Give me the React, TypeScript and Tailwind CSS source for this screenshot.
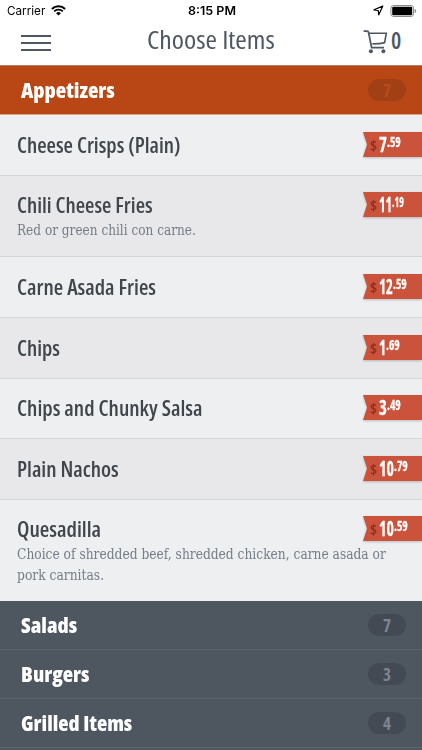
import { useLayoutEffect, useRef, useState } from 'react';

/* A single line of text, squeezed horizontally to a given set width. */
function Fit({ text, width, className = '' }: { text: string; width: number; className?: string }) {
  const ref = useRef<HTMLSpanElement>(null);
  const [scale, setScale] = useState(1);
  useLayoutEffect(() => {
    if (ref.current) setScale(width / ref.current.offsetWidth);
  }, [text, width]);
  return (
    <span className="flex shrink-0 items-start" style={{ width }}>
      <span
        ref={ref}
        className={`block shrink-0 origin-left whitespace-nowrap ${className}`}
        style={{ transform: `scaleX(${scale})` }}
      >
        {text}
      </span>
    </span>
  );
}

const SANS = "font-['Open_Sans','Noto_Sans',sans-serif] font-stretch-condensed";
const SERIF = "font-['DejaVu_Serif_Condensed','DejaVu_Serif',serif] font-stretch-condensed";

type Item = {
  name: string;
  width: number;
  whole: string;
  wholeWidth: number;
  cents: string;
  centsWidth: number;
  box: string;
  note?: { text: string; width: number }[];
};

const items: Item[] = [
  { name: 'Cheese Crisps (Plain)', width: 163, whole: '7', wholeWidth: 7, cents: '.59', centsWidth: 14, box: 'h-[61px] pt-[17px]' },
  { name: 'Chili Cheese Fries', width: 136, whole: '11', wholeWidth: 12, cents: '.19', centsWidth: 12, box: 'h-[81px] pt-[16px]', note: [{ text: 'Red or green chili con carne.', width: 179 }] },
  { name: 'Carne Asada Fries', width: 139, whole: '12', wholeWidth: 13, cents: '.59', centsWidth: 14, box: 'h-[61px] pt-[17px]' },
  { name: 'Chips', width: 43, whole: '1', wholeWidth: 6, cents: '.69', centsWidth: 14, box: 'h-[61px] pt-[17px]' },
  { name: 'Chips and Chunky Salsa', width: 185, whole: '3', wholeWidth: 7, cents: '.49', centsWidth: 14, box: 'h-[60px] pt-[16px]' },
  { name: 'Plain Nachos', width: 102, whole: '10', wholeWidth: 14, cents: '.79', centsWidth: 14, box: 'h-[61px] pt-[17px]' },
  {
    name: 'Quesadilla', width: 84, whole: '10', wholeWidth: 14, cents: '.59', centsWidth: 14, box: 'h-[101px] pt-[16px]',
    note: [
      { text: 'Choice of shredded beef, shredded chicken, carne asada or', width: 369 },
      { text: 'pork carnitas.', width: 87 },
    ],
  },
];

const sections = [
  { name: 'Salads', width: 56, count: '7' },
  { name: 'Burgers', width: 68, count: '3' },
  { name: 'Grilled Items', width: 111, count: '4' },
];

function StatusBar() {
  return (
    <div className="flex h-5 items-center justify-between pr-[5px] pl-[7px] font-['Inter','Roboto',sans-serif] text-black">
      <div className="flex w-[120px] items-center gap-[6px] pt-[2px]">
        <Fit text="Carrier" width={38} className="text-[12px] leading-[18px]" />
        <svg width="15" height="11" viewBox="0 0 15 11" fill="none" className="mb-[1px]">
          <path d="M0.9 3.9a9.6 9.6 0 0 1 13.2 0" stroke="#000" strokeWidth="2" />
          <path d="M3.2 6.4a6.2 6.2 0 0 1 8.6 0" stroke="#000" strokeWidth="1.9" />
          <path d="M7.5 10.6 5.1 8.2a3.4 3.4 0 0 1 4.8 0z" fill="#000" />
        </svg>
      </div>
      <div className="pt-[2px] pl-[3px]">
        <Fit text="8:15 PM" width={48} className="text-[12px] leading-[18px] font-semibold" />
      </div>
      <div className="flex w-[123px] items-center justify-end gap-[6px] pt-[1px]">
        <svg width="11" height="11" viewBox="0 0 11 11" fill="none">
          <path d="M9.8 1 1 4.9 5.2 5.5 5.8 9.8z" stroke="#000" strokeWidth="1.2" strokeLinejoin="round" />
        </svg>
        <svg width="27" height="12" viewBox="0 0 27 12" fill="none">
          <rect x="0.9" y="0.5" width="22.6" height="11" rx="2.6" stroke="#8a8a8a" />
          <rect x="2.2" y="1.8" width="20" height="8.4" rx="1.2" fill="#000" />
          <path d="M24.6 4v4c1.1-.4 1.6-1.1 1.6-2s-.5-1.6-1.6-2z" fill="#8a8a8a" />
        </svg>
      </div>
    </div>
  );
}

function PriceTag({ item }: { item: Item }) {
  return (
    <div className="h-[26px] w-[60px] shrink-0 drop-shadow-[0_1px_1px_rgba(0,0,0,0.22)]">
      <div className={`flex h-[25px] items-start bg-[#cb533b] pl-[8px] [clip-path:polygon(1px_0,100%_0,100%_100%,1px_100%,5px_50%)] ${SANS}`}>
        <Fit text="$" width={7} className="text-[15px] leading-[26px] font-bold text-[#8f3021]" />
        <div className="w-[2px] shrink-0" />
        <Fit text={item.whole} width={item.wholeWidth + 1} className="text-[21px] leading-[25px] font-bold text-white [-webkit-text-stroke:0.3px_white]" />
        <Fit text={item.cents} width={item.centsWidth} className="text-[14px] leading-[20px] font-bold text-white [-webkit-text-stroke:0.3px_white]" />
      </div>
    </div>
  );
}

function Badge({ count, className }: { count: string; className: string }) {
  return (
    <div className={`flex h-[22px] w-[38px] justify-center rounded-full ${className}`}>
      <Fit text={count} width={8} className={`text-[17px] leading-[23px] font-bold ${SANS}`} />
    </div>
  );
}

export default function App() {
  return (
    <div className="flex h-[750px] w-[422px] flex-col overflow-hidden bg-white">
      <StatusBar />
      <header className="flex h-[46px] shrink-0 justify-between border-b border-[#ad8068] pr-[21px] pl-[21px] text-[#4f5763]">
        <div className="flex w-[80px] flex-col gap-[5px] pt-[15px]">
          <div className="h-[2px] w-[30px] bg-[#4f5763]" />
          <div className="h-[2px] w-[30px] bg-[#4f5763]" />
          <div className="h-[2px] w-[30px] bg-[#4f5763]" />
        </div>
        <Fit text="Choose Items" width={128} className={`text-[26px] leading-[39px] ${SANS}`} />
        <div className="flex w-[80px] justify-end gap-[3px]">
          <svg width="25" height="24" viewBox="0 0 25 24" fill="none" className="mt-[10px]">
            <path d="M0.6 1.2 4 1.2Q5.4 1.2 5.6 2.6L8.6 17.6H21" stroke="#4f5763" strokeWidth="1.8" />
            <path d="M6 3.2H23.3L21.6 12.6Q16 14 9.3 13.8" stroke="#4f5763" strokeWidth="1.6" />
            <circle cx="7.9" cy="21.2" r="2" fill="#4f5763" />
            <circle cx="20.4" cy="21.2" r="2" fill="#4f5763" />
          </svg>
          <Fit text="0" width={10} className={`text-[23px] leading-[41px] font-semibold ${SANS}`} />
        </div>
      </header>

      <div className="flex h-[49px] shrink-0 items-center justify-between border-b border-[#dba58d] bg-[#b84715] pr-[16px] pl-[21px]">
        <Fit text="Appetizers" width={94} className={`text-[21px] leading-[48px] font-extrabold text-white ${SANS}`} />
        <Badge count="7" className="bg-[#a33f14] text-[#b84a1d]" />
      </div>

      {items.map((item, i) => (
        <div
          key={item.name}
          className={`flex shrink-0 justify-between border-b pl-[16.5px] ${item.box} ${i % 2 ? 'bg-[#e8e8ea]' : 'bg-[#eeeff1]'} ${i === 6 ? 'border-[#eeeff1]' : 'border-[#d6d7d9]'}`}
        >
          <div className="flex w-[345.5px] flex-col">
            <Fit text={item.name} width={item.width} className={`mb-[2px] text-[21px] leading-[26px] font-semibold text-[#41464d] ${SANS}`} />
            {item.note?.map((line) => (
              <Fit key={line.text} text={line.text} width={line.width} className={`text-[14px] leading-[21px] text-[#757d88] ${SERIF}`} />
            ))}
          </div>
          <PriceTag item={item} />
        </div>
      ))}

      {sections.map((s) => (
        <div key={s.name} className="flex h-[49px] shrink-0 items-center justify-between border-b border-[#5a626c] bg-[#4e565f] pr-[16px] pl-[21px]">
          <Fit text={s.name} width={s.width} className={`text-[21px] leading-[48px] font-extrabold text-white ${SANS}`} />
          <Badge count={s.count} className="bg-[#434a53] text-[#7d858f]" />
        </div>
      ))}
      <div className="h-[2px] shrink-0 bg-[#4e565f]" />
    </div>
  );
}
